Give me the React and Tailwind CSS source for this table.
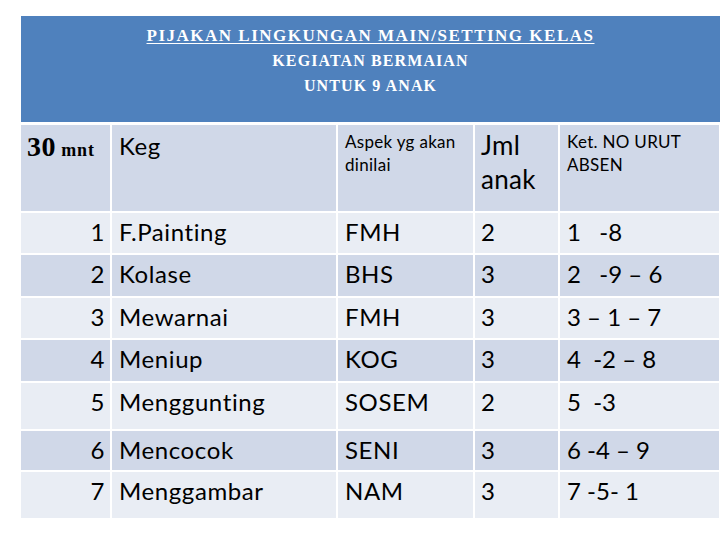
const rows = [
  { no: "1", keg: "F.Painting", aspek: "FMH", jml: "2", ket: "1   -8", dark: false },
  { no: "2", keg: "Kolase", aspek: "BHS", jml: "3", ket: "2   -9 – 6", dark: true },
  { no: "3", keg: "Mewarnai", aspek: "FMH", jml: "3", ket: "3 – 1 – 7", dark: false },
  { no: "4", keg: "Meniup", aspek: "KOG", jml: "3", ket: "4  -2 – 8", dark: true },
  { no: "5", keg: "Menggunting", aspek: "SOSEM", jml: "2", ket: "5  -3", dark: false },
  { no: "6", keg: "Mencocok", aspek: "SENI", jml: "3", ket: "6 -4 – 9", dark: true },
  { no: "7", keg: "Menggambar", aspek: "NAM", jml: "3", ket: "7 -5- 1", dark: false },
];

const serif = "font-['Liberation_Serif',serif]";
const sans = "font-['Lato','Liberation_Sans',sans-serif]";

export default function App() {
  return (
    <div className="w-[720px] h-[540px] bg-white pt-[16px] pl-[21px] overflow-hidden">
      <div className={`h-[106px] bg-[#4f81bd] text-white font-bold text-center ${serif} pt-[7px]`}>
        <div className="text-[17px] leading-[25px] underline underline-offset-2 tracking-[1.5px]">PIJAKAN LINGKUNGAN MAIN/SETTING KELAS</div>
        <div className="text-[16px] leading-[25px] tracking-[1.1px]">KEGIATAN BERMAIAN</div>
        <div className="text-[16px] leading-[25px] tracking-[1.1px]">UNTUK 9 ANAK</div>
      </div>
      <div className={`mt-[3px] grid grid-cols-[89px_224px_135px_83px_159px] grid-rows-[86px_40px_41px_40px_41px_46px_39px_46px] gap-[2px] bg-white text-black ${sans}`}>
        <div className="bg-[#d0d8e8] pl-[6px] pt-[7px] whitespace-nowrap">
          <span className={`${serif} font-bold text-[28px] leading-[30px] tracking-[0.5px]`}>30</span>
          <span className={`${serif} font-bold text-[18px] leading-[30px] tracking-[0.8px]`}> mnt</span>
        </div>
        <div className="bg-[#d0d8e8] pl-[7px] pt-[5px] text-[24px] leading-[32px] tracking-[0.5px]">Keg</div>
        <div className="bg-[#d0d8e8] pl-[7px] pt-[5px] text-[17px] leading-[23px] tracking-[0.3px]">Aspek yg akan<br />dinilai</div>
        <div className="bg-[#d0d8e8] pl-[6px] pt-[3px] text-[26px] leading-[34px] tracking-[0.3px]">Jml<br />anak</div>
        <div className="bg-[#d0d8e8] pl-[7px] pt-[5px] text-[17px] leading-[23px] tracking-[0.3px]">Ket. NO URUT<br />ABSEN</div>
        {rows.map((r) => {
          const bg = r.dark ? "bg-[#d0d8e8]" : "bg-[#e9edf4]";
          const cell = `${bg} pt-[3px] text-[24px] leading-[32px] whitespace-pre`;
          return [
            <div key={r.no + "a"} className={`${cell} tracking-[0.6px] text-right pr-[5px]`}>{r.no}</div>,
            <div key={r.no + "b"} className={`${cell} tracking-[0.6px] pl-[7px]`}>{r.keg}</div>,
            <div key={r.no + "c"} className={`${cell} tracking-[0.6px] pl-[7px]`}>{r.aspek}</div>,
            <div key={r.no + "d"} className={`${cell} tracking-[0.6px] pl-[6px]`}>{r.jml}</div>,
            <div key={r.no + "e"} className={`${cell} tracking-[0px] pl-[7px]`}>{r.ket}</div>,
          ];
        })}
      </div>
    </div>
  );
}
